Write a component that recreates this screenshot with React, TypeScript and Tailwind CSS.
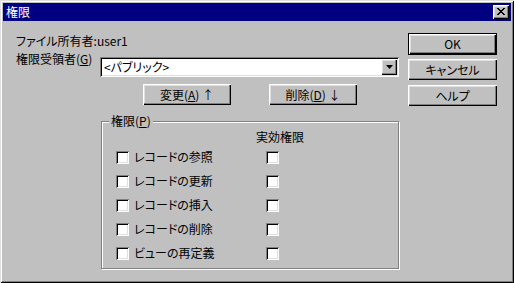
import React from "react";

const font = "font-['MS_UI_Gothic','Noto_Sans_CJK_JP',sans-serif] [font-feature-settings:'palt']";
const raised =
  "shadow-[inset_1px_1px_#fff,inset_-1px_-1px_#000,inset_-2px_-2px_#808080,inset_2px_2px_#dfdfdf]";
const sunken =
  "shadow-[inset_1px_1px_#808080,inset_-1px_-1px_#fff,inset_2px_2px_#000,inset_-2px_-2px_#dfdfdf]";

function Btn({ children, className = "" }: { children: React.ReactNode; className?: string }) {
  return (
    <div
      className={`flex items-center justify-center bg-[#c0c0c0] text-[12px] leading-none text-black ${raised} ${className}`}
    >
      {children}
    </div>
  );
}

function Check() {
  return <div className={`w-[13px] h-[13px] bg-white shrink-0 ${sunken}`} />;
}

const rows = ["レコードの参照", "レコードの更新", "レコードの挿入", "レコードの削除", "ビューの再定義"];

export default function App() {
  return (
    <div
      className={`w-[514px] h-[283px] bg-[#c0c0c0] p-[3px] flex flex-col text-black ${font} shadow-[inset_1px_1px_#dfdfdf,inset_-1px_-1px_#000,inset_2px_2px_#fff,inset_-2px_-2px_#808080]`}
    >
      <div className="h-[18px] bg-[#000080] flex items-center justify-between pl-[3px] pr-[2px]">
        <span className="text-white text-[12px] leading-none">権限</span>
        <div className={`w-[16px] h-[14px] bg-[#c0c0c0] flex items-center justify-center ${raised}`}>
          <svg width="8" height="7" viewBox="0 0 8 7" className="mb-[1px]">
            <path d="M0 0h2v1h1v1h2V1h1V0h2v1H7v1H6v1H5v1h1v1h1v1h1v1H6V6H5V5H3v1H2v1H0V6h1V5h1V4h1V3H2V2H1V1H0z" fill="#000" />
          </svg>
        </div>
      </div>
      <div className="flex flex-1">
        <div className="w-[396px] pl-[13px] pt-[12px] flex flex-col">
          <div className="h-[16px] leading-[16px] text-[12px]">ファイル所有者:user1</div>
          <div className="flex items-start mt-[2px]">
            <div className="w-[84px] h-[16px] leading-[16px] text-[12px]">
              権限受領者(<span className="underline underline-offset-1">G</span>)
            </div>
            <div className={`mt-[6px] w-[299px] h-[20px] bg-white p-[2px] flex ${sunken}`}>
              <div className="flex-1 flex items-center pl-[2px] text-[12px] leading-none">&lt;パブリック&gt;</div>
              <div className={`w-[16px] h-[16px] bg-[#c0c0c0] flex items-center justify-center ${raised}`}>
                <svg width="7" height="4" viewBox="0 0 7 4">
                  <path d="M0 0h7L3.5 4z" fill="#000" />
                </svg>
              </div>
            </div>
          </div>
          <div className="flex mt-[7px] pl-[127px] gap-[38px]">
            <Btn className="w-[88px] h-[21px]">
              変更(<span className="underline underline-offset-1">A</span>) ↑
            </Btn>
            <Btn className="w-[88px] h-[21px]">
              削除(<span className="underline underline-offset-1">D</span>) ↓
            </Btn>
          </div>
          <div className="relative mt-[8px] ml-[85px] w-[298px] pt-[8px]">
            <div className="absolute left-[8px] top-0 px-[2px] bg-[#c0c0c0] h-[16px] leading-[16px] text-[12px]">
              権限(<span className="underline underline-offset-1">P</span>)
            </div>
            <div className="border border-[#808080] shadow-[1px_1px_0_#fff,inset_1px_1px_0_#fff] h-[148px] pt-[7px] pl-[14px]">
              <div className="h-[16px] leading-[16px] text-[12px] pl-[140px]">実効権限</div>
              {rows.map((r) => (
                <div key={r} className="flex items-center h-[24px]">
                  <Check />
                  <span className="ml-[5px] w-[132px] text-[12px] leading-none">{r}</span>
                  <Check />
                </div>
              ))}
            </div>
          </div>
        </div>
        <div className="pl-[9px] pt-[12px] flex flex-col">
          <div className="border border-black">
            <Btn className="w-[87px] h-[20px]">OK</Btn>
          </div>
          <Btn className="w-[89px] h-[21px] mt-[4px]">キャンセル</Btn>
          <Btn className="w-[89px] h-[21px] mt-[5px]">ヘルプ</Btn>
        </div>
      </div>
    </div>
  );
}
